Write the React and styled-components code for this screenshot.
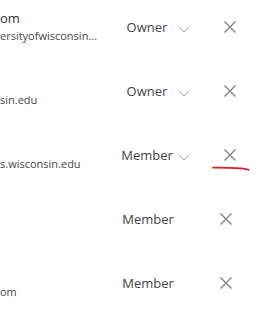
import React from 'react';
import styled, { createGlobalStyle } from 'styled-components';

const GlobalStyle = createGlobalStyle`
  html, body {
    margin: 0;
    padding: 0;
    background: #ffffff;
    overflow: hidden;
  }
  body {
    font-family: "Open Sans", "Noto Sans", "Liberation Sans", sans-serif;
    -webkit-font-smoothing: antialiased;
  }
`;

const members = [
  { name: 'om', email: 'ersityofwisconsin...', role: 'Owner', editable: true },
  { name: '', email: 'sin.edu', role: 'Owner', editable: true },
  { name: '', email: 's.wisconsin.edu', role: 'Member', editable: true, marked: true },
  { name: '', email: '', role: 'Member', editable: false },
  { name: '', email: 'om', role: 'Member', editable: false },
];

const List = styled.div`
  width: 258px;
  height: 314px;
  display: flex;
  flex-direction: column;
`;

const Row = styled.div`
  position: relative;
  height: 54px;
  padding-bottom: 10px;
  display: grid;
  grid-template-columns: 116px 62px 12px 1fr;
  align-items: center;
  flex-shrink: 0;
`;

const Person = styled.div`
  display: flex;
  flex-direction: column;
  white-space: nowrap;
  overflow: hidden;
`;

const Name = styled.div`
  font-size: 13px;
  line-height: 17px;
  height: 17px;
  color: #323130;
`;

const Email = styled.div`
  font-size: 11px;
  line-height: 17px;
  height: 17px;
  color: #484644;
`;

const Role = styled.div`
  font-size: 13px;
  color: #444444;
  text-align: center;
  white-space: nowrap;
  padding-left: ${p => (p.$editable ? '0' : '2px')};
`;

const Chevron = styled.svg`
  width: 12px;
  height: 7px;
  margin-top: 5px;
  visibility: ${p => (p.$hidden ? 'hidden' : 'visible')};
`;

const Remove = styled.button`
  justify-self: start;
  margin-left: ${p => (p.$shift ? '30px' : '34px')};
  width: 12px;
  height: 12px;
  padding: 0;
  border: none;
  background: none;
  display: flex;
  margin-top: -1px;
`;

const Mark = styled.svg`
  position: absolute;
  left: 211px;
  top: 37px;
  width: 40px;
  height: 8px;
`;

const DownIcon = ({ hidden }) => (
  <Chevron $hidden={hidden} viewBox="0 0 12 7">
    <polyline points="0.5,0.8 6,5.8 11.5,0.8" fill="none" stroke="#a0a0a0" strokeWidth="1" />
  </Chevron>
);

const CloseIcon = () => (
  <svg width="12" height="12" viewBox="0 0 12 12">
    <path d="M0.5 0.5 L11.5 11.5 M11.5 0.5 L0.5 11.5" stroke="#7a7a7a" strokeWidth="1.1" fill="none" />
  </svg>
);

const App = () => (
  <>
    <GlobalStyle />
    <List>
      {members.map((m, i) => (
        <Row key={i}>
          <Person>
            <Name>{m.name || '\u00a0'}</Name>
            <Email>{m.email || '\u00a0'}</Email>
          </Person>
          <Role $editable={m.editable}>{m.role}</Role>
          <DownIcon hidden={!m.editable} />
          <Remove $shift={!m.editable} aria-label="Remove">
            <CloseIcon />
          </Remove>
          {m.marked && (
            <Mark viewBox="0 0 40 8">
              <path d="M2 2.6 C12 2.4 22 2.8 30 3.4 C33 3.6 35.5 4.2 37.5 4.8" stroke="#d4202a" strokeWidth="1.8" fill="none" strokeLinecap="round" />
            </Mark>
          )}
        </Row>
      ))}
    </List>
  </>
);

export default App;
